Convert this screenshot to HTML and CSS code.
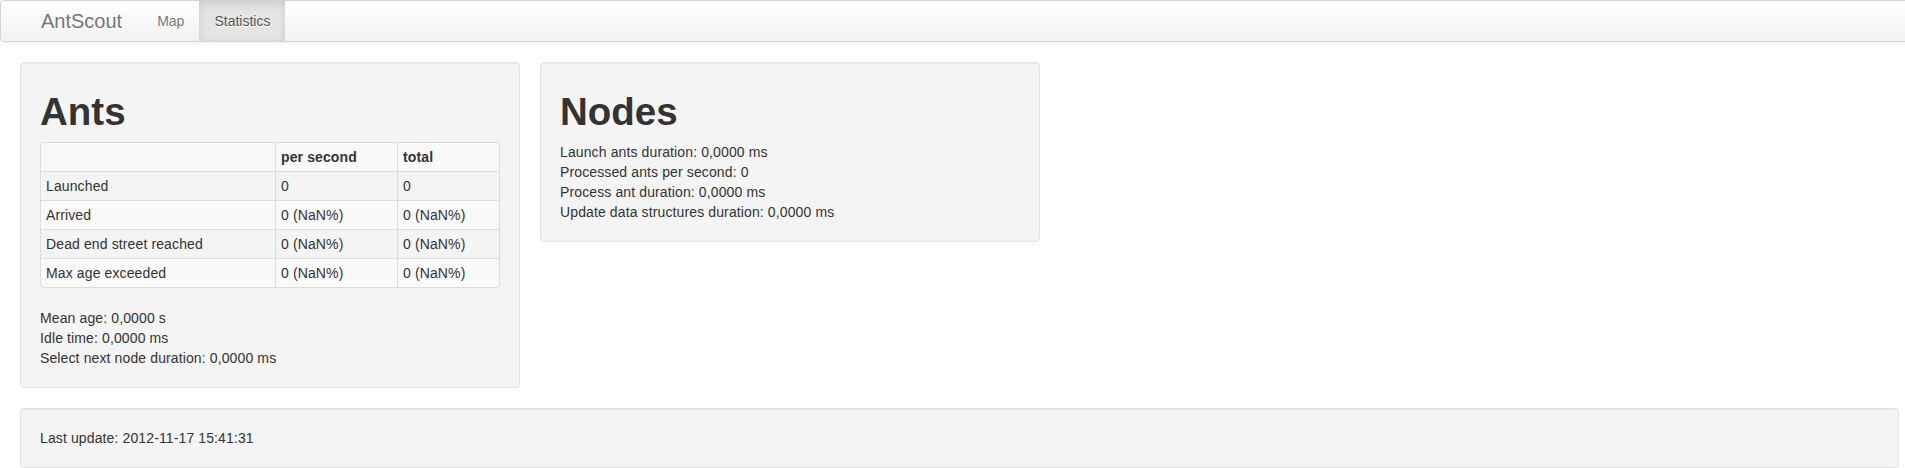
FILE: index.html
```html
<!DOCTYPE html>
<html>
<head>
<meta charset="utf-8">
<title>AntScout - Statistics</title>
<link rel="stylesheet" href="styles.css">
</head>
<body>
<div class="page">
  <div class="navbar">
    <div class="navbar-inner">
      <a class="brand" href="#">AntScout</a>
      <ul class="nav">
        <li><a href="#">Map</a></li>
        <li class="active"><a href="#">Statistics</a></li>
      </ul>
    </div>
  </div>
  <div class="container">
    <div class="row">
      <div class="well ants">
        <h1>Ants</h1>
        <table class="table">
          <tbody>
            <tr><th class="c1"></th><th class="c2">per second</th><th class="c3">total</th></tr>
            <tr><td>Launched</td><td>0</td><td>0</td></tr>
            <tr><td>Arrived</td><td>0 (NaN%)</td><td>0 (NaN%)</td></tr>
            <tr><td>Dead end street reached</td><td>0 (NaN%)</td><td>0 (NaN%)</td></tr>
            <tr><td>Max age exceeded</td><td>0 (NaN%)</td><td>0 (NaN%)</td></tr>
          </tbody>
        </table>
        <div class="lines">
          <div>Mean age: 0,0000 s</div>
          <div>Idle time: 0,0000 ms</div>
          <div>Select next node duration: 0,0000 ms</div>
        </div>
      </div>
      <div class="well nodes">
        <h1>Nodes</h1>
        <div class="lines">
          <div>Launch ants duration: 0,0000 ms</div>
          <div>Processed ants per second: 0</div>
          <div>Process ant duration: 0,0000 ms</div>
          <div>Update data structures duration: 0,0000 ms</div>
        </div>
      </div>
    </div>
    <div class="well footer">Last update: 2012-11-17 15:41:31</div>
  </div>
</div>
</body>
</html>
```
FILE: styles.css
```css
html, body {
  margin: 0;
  padding: 0;
  overflow: hidden;
  background: #fff;
}
body {
  font-family: "Liberation Sans", Arial, Helvetica, sans-serif;
  font-size: 14px;
  line-height: 20px;
  color: #333;
}
.page {
  width: 1919px;
}
.navbar {
  margin-bottom: 20px;
}
.navbar-inner {
  display: flex;
  align-items: stretch;
  min-height: 40px;
  padding: 0 20px;
  border: 1px solid #d4d4d4;
  border-radius: 4px;
  background: linear-gradient(to bottom, #ffffff, #f2f2f2);
  box-shadow: 0 1px 4px rgba(0,0,0,0.065);
}
.brand {
  display: block;
  padding: 10px 20px;
  font-size: 20px;
  line-height: 20px;
  font-weight: 200;
  color: #777;
  text-decoration: none;
  text-shadow: 0 1px 0 #fff;
}
.nav {
  display: flex;
  list-style: none;
  margin: 0;
  padding: 0;
}
.nav a {
  display: block;
  padding: 10px 15px;
  line-height: 20px;
  color: #777;
  text-decoration: none;
  text-shadow: 0 1px 0 #fff;
}
.nav .active a {
  color: #555;
  background-color: #e5e5e5;
  box-shadow: inset 0 3px 8px rgba(0,0,0,0.125);
}
.container {
  padding: 0 20px;
}
.row {
  display: flex;
  align-items: flex-start;
  gap: 20px;
}
.well {
  box-sizing: border-box;
  min-height: 20px;
  padding: 19px;
  margin-bottom: 20px;
  background-color: #f4f4f4;
  border: 1px solid #e3e3e3;
  border-radius: 4px;
  box-shadow: inset 0 1px 1px rgba(0,0,0,0.05);
  letter-spacing: 0.12px;
}
.ants, .nodes { width: 500px; }
h1 {
  margin: 10px 0;
  font-size: 38.5px;
  line-height: 40px;
  font-weight: bold;
  color: #333;
  letter-spacing: 0;
}
.table {
  width: 460px;
  margin-bottom: 20px;
  border-collapse: separate;
  border-spacing: 0;
  border: 1px solid #ddd;
  border-left: 0;
  border-radius: 4px;
  table-layout: fixed;
}
.table th, .table td {
  padding: 4px 5px;
  line-height: 20px;
  text-align: left;
  vertical-align: top;
  border-left: 1px solid #ddd;
  border-top: 1px solid #ddd;
}
.table tr:first-child th, .table tr:first-child td {
  border-top: 0;
}
.table th { font-weight: bold; }
.table tr:nth-child(odd) th, .table tr:nth-child(odd) td {
  background-color: #f9f9f9;
}
.table tr:first-child th:first-child { border-top-left-radius: 4px; }
.table tr:first-child th:last-child { border-top-right-radius: 4px; }
.table tr:last-child td:first-child { border-bottom-left-radius: 4px; }
.table tr:last-child td:last-child { border-bottom-right-radius: 4px; }
.c1 { width: 224px; }
.c2 { width: 111px; }
.c3 { width: auto; }
.footer {
  margin-bottom: 0;
}
```
